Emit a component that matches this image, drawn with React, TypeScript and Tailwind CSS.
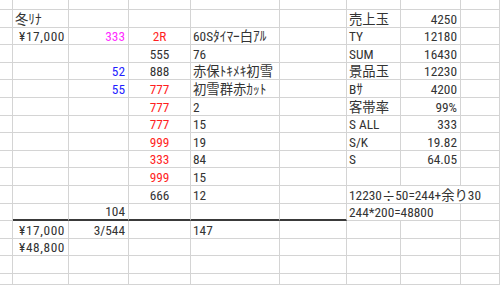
import React from 'react';

type Cell = { t?: React.ReactNode; c?: string; a?: 'l' | 'r' | 'c'; span?: number; thick?: boolean };

const colW = ['w-[13px]', 'w-[56px]', 'w-[60px]', 'w-[62px]', 'w-[89px]', 'w-[67px]', 'w-[54px]', 'w-[60px]', 'w-[39px]'];
const spanW: Record<string, string> = { '6-2': 'w-[114px]', '6-3': 'w-[153px]' };
// default alignment per column (A..I)
const colAlign: ('l' | 'r' | 'c')[] = ['l', 'r', 'r', 'c', 'l', 'l', 'l', 'r', 'l'];

const RED = 'text-[#ff1f1f]';
const BLUE = 'text-[#1f1fff]';
const PINK = 'text-[#ff2bff]';

const yen = (v: string) => <span className="tracking-[0.6px]">{v}</span>;

// sparse rows: column index -> cell
const rows: Record<number, Cell>[] = [
  { 1: { t: '冬ﾘﾅ', a: 'l' }, 6: { t: '売上玉' }, 7: { t: '4250' } },
  { 1: { t: yen('¥17,000') }, 2: { t: '333', c: PINK }, 3: { t: '2R', c: RED }, 4: { t: '60Sﾀｲﾏｰ白ｱﾙ' }, 6: { t: 'TY' }, 7: { t: '12180' } },
  { 3: { t: '555' }, 4: { t: '76' }, 6: { t: 'SUM' }, 7: { t: '16430' } },
  { 2: { t: '52', c: BLUE }, 3: { t: '888' }, 4: { t: '赤保ﾄｷﾒｷ初雪' }, 6: { t: '景品玉' }, 7: { t: '12230' } },
  { 2: { t: '55', c: BLUE }, 3: { t: '777', c: RED }, 4: { t: '初雪群赤ｶｯﾄ' }, 6: { t: 'Bｻ' }, 7: { t: '4200' } },
  { 3: { t: '777', c: RED }, 4: { t: '2' }, 6: { t: '客帯率' }, 7: { t: '99%' } },
  { 3: { t: '777', c: RED }, 4: { t: '15' }, 6: { t: 'S ALL' }, 7: { t: '333' } },
  { 3: { t: '999', c: RED }, 4: { t: '19' }, 6: { t: 'S/K' }, 7: { t: '19.82' } },
  { 3: { t: '333', c: RED }, 4: { t: '84' }, 6: { t: 'S' }, 7: { t: '64.05' } },
  { 3: { t: '999', c: RED }, 4: { t: '15' } },
  {
    3: { t: '666' },
    4: { t: '12' },
    6: {
      t: (
        <>
          12230<span className="font-['Noto_Sans_CJK_JP',sans-serif]">÷</span>50=244+余り30
        </>
      ),
      span: 3,
    },
  },
  {
    1: { thick: true },
    2: { t: '104', thick: true },
    3: { thick: true },
    4: { thick: true },
    5: { thick: true },
    6: { t: '244*200=48800', span: 2 },
  },
  { 1: { t: yen('¥17,000') }, 2: { t: '3/544' }, 4: { t: '147' } },
  { 1: { t: yen('¥48,800') } },
  {},
];

function Row({ cells, h }: { cells: Record<number, Cell>; h: string }) {
  const out: React.ReactNode[] = [];
  for (let i = 0; i < 9; i++) {
    const cell = cells[i] ?? {};
    const span = cell.span ?? 1;
    const w = span > 1 ? spanW[`${i}-${span}`] : colW[i];
    const a = cell.a ?? colAlign[i];
    const justify = a === 'r' ? 'justify-end pr-[3px]' : a === 'c' ? 'justify-center' : 'justify-start pl-[2px]';
    const bottom = cell.thick ? 'border-b-2 border-b-[#3a3a3a]' : 'border-b border-b-[#d4d4d4]';
    out.push(
      <div
        key={i}
        className={`${w} ${justify} ${bottom} ${cell.c ?? 'text-[#333333]'} shrink-0 h-full flex items-end border-r border-r-[#d4d4d4] whitespace-nowrap`}
      >
        {cell.t}
      </div>
    );
    i += span - 1;
  }
  return <div className={`flex ${h}`}>{out}</div>;
}

export default function App() {
  return (
    <div className="w-[500px] h-[285px] overflow-hidden bg-white flex flex-col font-['Roboto_Condensed','Noto_Sans_CJK_JP',sans-serif] text-[13.33px] leading-[14px]">
      {/* header row, cut off at the top */}
      <Row cells={{}} h="h-[10px] shrink-0" />
      {rows.map((r, i) => (
        <Row key={i} cells={r} h="h-[17.6px] shrink-0" />
      ))}
      <Row cells={{}} h="flex-1" />
    </div>
  );
}
